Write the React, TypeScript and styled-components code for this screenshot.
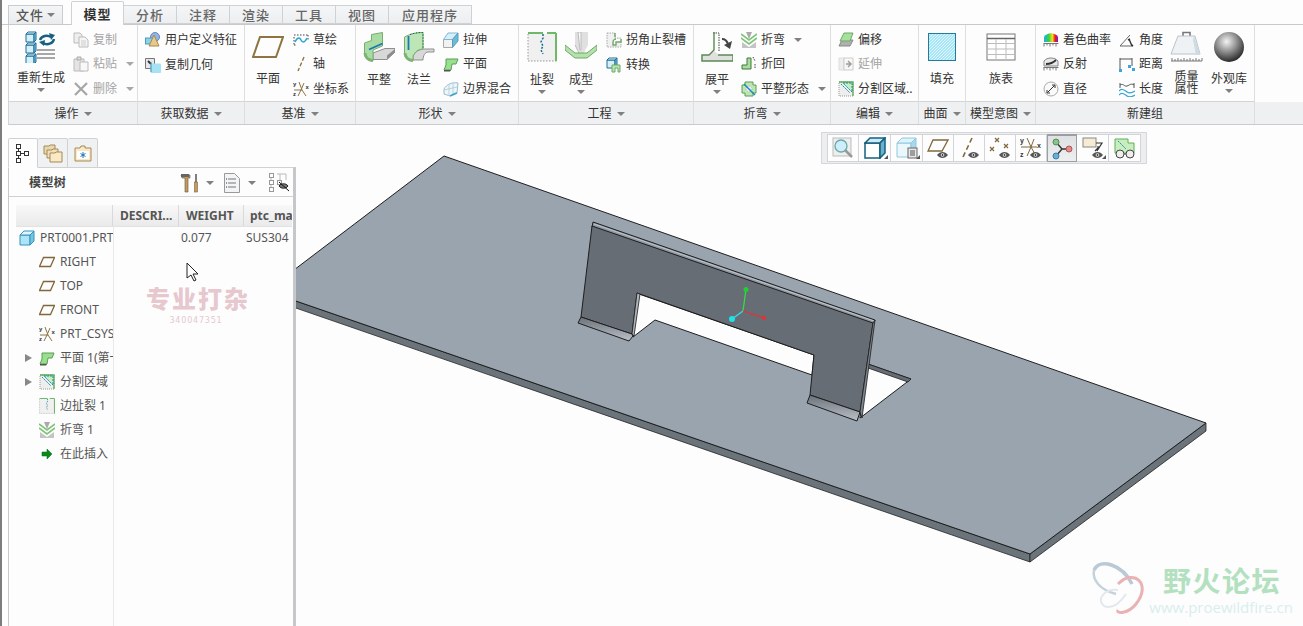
import React from "react";
import styled, { createGlobalStyle } from "styled-components";

const Global = createGlobalStyle`
  html, body { margin: 0; padding: 0; background: #fdfdfd; }
  #root { width: 1303px; height: 626px; overflow: hidden; }
  * { box-sizing: border-box; }
`;

const FONT = `"Noto Sans", "Noto Sans CJK SC", sans-serif`;

const Page = styled.div`
  width: 1303px; height: 626px; display: flex; flex-direction: column; overflow: hidden;
  border-left: 2px solid #7c7c7c; background: #fdfdfd; font: 12px/16px ${FONT}; color: #333;
`;
const TabRow = styled.div`
  display: flex; align-items: flex-end; height: 25px; padding-left: 6px;
  border-bottom: 1px solid #c9c9c9; flex: none; font-size: 13px;
`;
const FileTab = styled.div`
  width: 55px; height: 19px; margin-right: 8px; display: flex; align-items: center; justify-content: center; gap: 3px;
  background: linear-gradient(#f4f5f6, #e9ebed); border: 1px solid #c8cbcf; border-bottom: 0; color: #555; font-weight: 500; letter-spacing: 1px;
`;
const Tab = styled.div<{ $active?: boolean; $w?: number }>`
  width: ${p => p.$w ?? 53}px; height: ${p => (p.$active ? 24 : 19)}px; margin-bottom: ${p => (p.$active ? -1 : 0)}px;
  display: flex; align-items: center; justify-content: center; letter-spacing: 1px; font-weight: ${p => (p.$active ? 700 : 500)};
  color: ${p => (p.$active ? "#333" : "#666")}; background: ${p => (p.$active ? "#fdfdfd" : "linear-gradient(#f5f6f7,#eceef0)")};
  border: 1px solid #cfd2d5; border-bottom: ${p => (p.$active ? "0" : "1px solid #cfd2d5")}; border-left-width: ${p => (p.$active ? 1 : 0)}px;
  border-radius: ${p => (p.$active ? "2px 2px 0 0" : "0")}; z-index: ${p => (p.$active ? 1 : 0)};
`;
const Ribbon = styled.div`
  display: flex; height: 100px; margin-left: 6px; flex: none; border-bottom: 1px solid #c9cbce; background:
    linear-gradient(#eff0f2, #eff0f2) 0 100% / 100% 22px no-repeat, linear-gradient(#d2d4d6, #d2d4d6) 0 77px / 100% 1px no-repeat, #fdfdfd; border-left: 1px solid #d4d4d4;
`;
const Group = styled.div<{ $w: number }>`
  width: ${p => p.$w}px; flex: none; display: flex; flex-direction: column; border-right: 1px solid #dcdee0;
`;
const GroupBody = styled.div<{ $pad?: number }>`
  height: 77px; display: flex; padding: 3px 0 0 ${p => p.$pad ?? 0}px; border-bottom: 1px solid #d2d4d6; flex: none;
`;
const GroupLabel = styled.div`
  flex: 1; display: flex; align-items: center; justify-content: center; gap: 5px; color: #333; padding-top: 1px;
`;
const Caret = styled.i<{ $gray?: boolean }>`
  display: inline-block; width: 0; height: 0; border-left: 4px solid transparent; border-right: 4px solid transparent;
  border-top: 4px solid ${p => (p.$gray ? "#a8a8a8" : "#808080")}; flex: none;
`;
const BigBtn = styled.div<{ $w: number; $ml?: number; $iconH?: number }>`
  width: ${p => p.$w}px; margin-left: ${p => p.$ml ?? 0}px; flex: none; display: flex; flex-direction: column; align-items: center;
  & > svg { margin-top: ${p => p.$iconH ?? 3}px; flex: none; }
`;
const BigLabel = styled.div<{ $top: number; $lh?: number }>`
  white-space: nowrap; margin-top: ${p => p.$top}px; line-height: ${p => p.$lh ?? 14}px; text-align: center;
`;
const BigCaret = styled(Caret)`
  margin-top: 3px;
`;
const SmallCol = styled.div<{ $w: number; $ml?: number }>`
  width: ${p => p.$w}px; margin-left: ${p => p.$ml ?? 0}px; flex: none; display: flex; flex-direction: column;
`;
const SmallBtn = styled.div<{ $off?: boolean }>`
  height: 24.5px; display: flex; align-items: center; gap: 4px; white-space: nowrap; color: ${p => (p.$off ? "#a4a4a4" : "#333")};
  & > svg { flex: none; }
  & > i { margin-left: 5px; }
`;
const Main = styled.div`
  flex: 1; display: flex; min-height: 0; position: relative;
`;
const LeftCol = styled.div`
  width: 294px; padding: 13px 0 0 6px; display: flex; flex-direction: column; flex: none;
`;
const PanelTabs = styled.div`
  display: flex; height: 30px; flex: none; margin-bottom: -1px; z-index: 1;
`;
const PanelTab = styled.div<{ $active?: boolean }>`
  width: 30px; display: flex; align-items: center; justify-content: center; border: 1px solid #cfd1d3; border-left-width: ${p => (p.$active ? 1 : 0)}px;
  border-bottom-color: ${p => (p.$active ? "#fdfdfd" : "#cfd1d3")}; background: ${p => (p.$active ? "#fdfdfd" : "#f0f1f2")}; border-radius: 2px 2px 0 0;
`;
const Panel = styled.div`
  flex: 1; display: flex; flex-direction: column; border-left: 1px solid #c8c8c8; border-right: 3px solid #c5c7ca; border-top: 1px solid #cfd1d3; background: #fdfdfd; position: relative; min-height: 0;
`;
const PanelHead = styled.div`
  height: 29px; flex: none; display: flex; align-items: center; border-bottom: 1px solid #cfd1d3; padding: 1px 0 0 20px;
`;
const PanelTitle = styled.div`
  font-weight: 700; color: #444; flex: none; width: 151px; letter-spacing: .4px;
`;
const HeadTools = styled.div`
  display: flex; align-items: center;
  & > i { margin: 0 10px 0 6px; }
  & > i:nth-of-type(2) { margin: 0 12px 0 8px; }
`;
const Table = styled.div`
  flex: 1; margin: 8px 1px 0 7px; display: flex; flex-direction: column; min-height: 0; overflow: hidden;
`;
const HeadRow = styled.div`
  height: 22px; flex: none; display: grid; grid-template-columns: 97px 66px 65px 1fr; background: linear-gradient(#f8f8f8, #eaeaea);
  border-bottom: 1px solid #e2e2e2;
`;
const HeadCell = styled.div`
  display: flex; align-items: center; padding-left: 7px; border-right: 1px solid #d9d9d9; font-weight: 700; color: #555; overflow: hidden; white-space: nowrap;
  &:last-child { border-right: 0; padding-left: 6px; }
`;
const TreeBody = styled.div`
  flex: 1; margin-top: -1px; background: linear-gradient(#e9e9e9, #e9e9e9) 97px 1px / 1px 100% no-repeat;
`;
const RootRow = styled.div`
  height: 24px; display: grid; grid-template-columns: 97px 66px 65px 1fr; align-items: center; color: #555;
`;
const TreeCell = styled.div`
  display: flex; align-items: center; gap: 5px; padding-left: 3px; white-space: nowrap; overflow: hidden;
  & > svg { flex: none; }
`;
const ValCell = styled.div`
  padding-left: 2px;
`;
const MatCell = styled.div`
  padding-left: 2px;
`;
const TreeRow = styled.div`
  height: 24px; width: 97px; display: flex; align-items: center; color: #555; white-space: nowrap; overflow: hidden;
`;
const Expander = styled.i<{ $show?: boolean }>`
  width: 0; height: 0; flex: none; margin: 0 7px 0 9px; border-top: 4px solid transparent; border-bottom: 4px solid transparent;
  border-left: 7px solid ${p => (p.$show ? "#888" : "transparent")};
`;
const RowIcon = styled.span`
  width: 16px; height: 16px; margin-right: 5px; flex: none; display: flex; align-items: center; justify-content: center;
`;
const Stamp = styled.div`
  position: absolute; left: 137px; top: 117px; width: 100px; text-align: center; color: #e6c8ce; font-weight: 900;
  font-size: 24px; line-height: 26px; letter-spacing: 2px; white-space: nowrap; font-family: "Noto Sans CJK SC", sans-serif;
`;
const StampNo = styled.div`
  font: 400 8px/10px "DejaVu Sans", sans-serif; color: #e6c8ce; letter-spacing: .8px; margin-top: 5px;
`;
const CursorMark = styled.svg`
  position: absolute; left: 177px; top: 94px;
`;
const Canvas = styled.div`
  flex: 1; position: relative; min-width: 0;
  & > svg.scene { display: block; width: 100%; height: 100%; }
`;
const ViewBar = styled.div`
  position: absolute; left: 525px; top: 7px; height: 32px; display: flex; align-items: stretch; padding: 1px 5px;
  background: #eceef0; border: 1px solid #d5d7da;
`;
const ViewBtn = styled.div<{ $active?: boolean; $w?: number }>`
  width: ${p => p.$w ?? 31}px; display: flex; align-items: center; justify-content: center; position: relative;
  background: ${p => (p.$active ? "linear-gradient(#dfe0e2,#eeeff0)" : "#fdfdfd")};
  border: 1px solid #d2d4d7; border-left-width: ${p => (p.$active ? 1 : 0)}px;
  ${p => (p.$active ? "border-color:#9c9ea1; border-top-width:2px;" : "")}
  &:first-child { border-left-width: 1px; }
`;
const Corner = styled.i`
  position: absolute; right: 2px; bottom: 2px; width: 0; height: 0; border-left: 4px solid transparent; border-bottom: 4px solid #555;
`;
const BrandMark = styled.div`
  position: absolute; right: 10px; bottom: 9px; width: 199px; display: flex; flex-direction: column; align-items: flex-end;
`;
const BrandCn = styled.div`
  font: 700 28px/28px "Noto Sans CJK SC", sans-serif; color: #b3e1bf; letter-spacing: 1.5px; margin-right: 12px; margin-bottom: 3px;
`;
const BrandUrl = styled.div`
  font: 400 15px/20px "Open Sans", sans-serif; color: #d9eeee; white-space: nowrap;
`;
const BrandLogo = styled.svg`
  position: absolute; left: -4px; top: -6px;
`;

const Cube = ({ x, y, s = 8, c = "#1d6f96" }: { x: number; y: number; s?: number; c?: string }) => (
  <g stroke={c} strokeWidth="1" strokeLinejoin="round">
    <path d={`M${x} ${y + 2}h${s}v${s}h-${s}z`} fill="#d6f0fa" />
    <path d={`M${x} ${y + 2}l2 -2h${s}l-2 2z`} fill="#eef9fd" />
    <path d={`M${x + s} ${y + 2}l2 -2v${s}l-2 2z`} fill="#7cc3e2" />
  </g>
);
const IRegen = () => (
  <svg width="32" height="32" viewBox="0 0 32 32">
    <Cube x={1} y={1} /><Cube x={1} y={12} /><Cube x={1} y={23} />
    <path d="M15 9a7 6 0 0 1 11-3M29 8a7 6 0 0 1-11 4" fill="none" stroke="#17607f" strokeWidth="2.4" />
    <path d="M24 2l6 2-4 5zM20 9l-6 2 5 4z" fill="#17607f" />
    <path d="M12 19h18M12 23h18M12 27h18" stroke="#8a8a8a" strokeWidth="1.6" />
  </svg>
);
const DocOff = () => (
  <svg width="16" height="16" viewBox="0 0 16 16"><path d="M1 1h6l2 2v8H1z" fill="#eee" stroke="#bbb" /><path d="M6 5h6l3 3v7H6z" fill="#f6f6f6" stroke="#bbb" /><path d="M8 9h5M8 11h5M8 13h5" stroke="#ccc" /></svg>
);
const PasteOff = () => (
  <svg width="16" height="16" viewBox="0 0 16 16"><path d="M1 3h10v12H1z" fill="#e4e4e4" stroke="#bbb" /><path d="M4 1h4v3H4z" fill="#ddd" stroke="#aaa" /><path d="M7 6h8v9H7z" fill="#f8f8f8" stroke="#bbb" /></svg>
);
const XOff = () => (
  <svg width="16" height="16" viewBox="0 0 16 16"><path d="M2 2l12 12M14 2L2 14" stroke="#a6a6a6" strokeWidth="2.2" /></svg>
);
const IUdf = () => (
  <svg width="16" height="16" viewBox="0 0 16 16"><circle cx="10" cy="5" r="4.5" fill="#8fb4e6" stroke="#6a86b6" /><rect x="0.5" y="6" width="7" height="6" fill="#8cd0ea" stroke="#4f9cc0" /><path d="M9 3l5 11H4z" fill="#e8c98c" stroke="#a88a50" /></svg>
);
const ICopyGeom = () => (
  <svg width="16" height="16" viewBox="0 0 16 16"><path d="M.5 1.5h9v10h-9z" fill="#e8e8e8" stroke="#777" /><path d="M3 4l3 3" stroke="#333" strokeWidth="2" /><path d="M6 7h9.500v8.500H6z" fill="#a6e2f4" stroke="#a6e2f4" /><path d="M6 5v10" stroke="#3f8fb0" /></svg>
);
const IPlaneBig = () => (
  <svg width="32" height="22" viewBox="0 0 32 22"><path d="M8 1h23l-7 20H1z" fill="none" stroke="#8e7440" strokeWidth="2" /></svg>
);
const ISketch = () => (
  <svg width="16" height="16" viewBox="0 0 16 16"><path d="M1 3h14M1 13h3" stroke="#444" strokeDasharray="1.500 1.500" /><path d="M1 5v8M15 3v6" stroke="#444" strokeDasharray="1.500 1.500" /><path d="M2 10c3-6 5-4 6-2s3 4 6-2" fill="none" stroke="#2aa3d6" strokeWidth="1.600" /></svg>
);
const IAxis = () => (
  <svg width="16" height="16" viewBox="0 0 16 16"><path d="M11 1L5 15" stroke="#8e7440" strokeWidth="1.400" strokeDasharray="4 2" /></svg>
);
const ICsys = ({ s = 16 }: { s?: number }) => (
  <svg width={s} height={s} viewBox="0 0 16 16"><path d="M6 1l3 8 4 6M11 2L8 9l-3 6M1 9h8" stroke="#8e7440" fill="none" /><text x="0" y="5" fontSize="6" fontFamily="Liberation Sans" fill="#333" fontWeight="700">y</text><text x="0" y="15" fontSize="6" fontFamily="Liberation Sans" fill="#333" fontWeight="700">z</text><text x="12.500" y="8" fontSize="6" fontFamily="Liberation Sans" fill="#333" fontWeight="700">x</text></svg>
);
const IFlat = () => (
  <svg width="32" height="32" viewBox="0 0 32 32">
    <path d="M10 21L22 16.500H32V20L24 27.500H10Z" fill="#d8d8d8" stroke="#8f8f8f" />
    <path d="M24 23.500L32 17V20L24 27.500Z" fill="#8d8d8d" />
    <path d="M1.500 11L8.500 8.500V2.500L19.500 .5V14L10 18V29C5 29 1.500 26 1.500 21Z" fill="#a9dca2" stroke="#78ad70" />
    <path d="M2 21C2 25 5 28 10 28.500" stroke="#7fb277" strokeWidth="3" fill="none" />
    <path d="M6 17.500L19.500 11.500" stroke="#1a78b8" strokeWidth="1.800" />
  </svg>
);
const IFlange = () => (
  <svg width="32" height="32" viewBox="0 0 32 32">
    <path d="M10 24C12 20 16 17 22 17H31V20H25C22 20 20 24 20 28H10Z" fill="#d8d8d8" stroke="#8f8f8f" />
    <path d="M1.500 5C7 2 13 .5 20 .5V17C15 17 12 20 10 24V29C5 29 1.500 26 1.500 21Z" fill="#bde6b6" stroke="#78ad70" />
    <path d="M2 21C2 25 5 28 10 28.500" stroke="#7fb277" strokeWidth="3" fill="none" />
    <path d="M5.500 4V18" stroke="#1a78b8" strokeWidth="1.800" />
    <path d="M7 2.500C11 1 15 .5 20 .5V16" stroke="#1a6a50" strokeDasharray="1.500 1.500" fill="none" />
  </svg>
);
const IExtrude = () => (
  <svg width="16" height="16" viewBox="0 0 16 16"><path d="M.5 7.500h9v8h-9z" fill="#f2f2f2" stroke="#aaa" /><path d="M.5 7.500L5 1h10L9.500 7.500z" fill="#d6eef8" stroke="#7fb9d4" /><path d="M9.500 7.500L15 1v8l-5.500 6.500z" fill="#6fb8d8" stroke="#5a9dbd" /></svg>
);
const IPlanar = ({ s = 16 }: { s?: number }) => (
  <svg width={s} height={s} viewBox="0 0 16 16"><path d="M3 3h12l-2 5H9l-1 6H1l2-5z" fill="#98e08e" stroke="#5f9a58" /><path d="M1 14h7l-1 1.500H1z" fill="#555" /></svg>
);
const IBlend = () => (
  <svg width="16" height="16" viewBox="0 0 16 16"><path d="M1 8c3-5 8-7 14-6l-1 10c-3 0-5 1-7 3L1 13z" fill="#eef6fa" stroke="#9dbccb" /><path d="M6 3v12M10 2v11M1 9l13-3" stroke="#b6d2de" /><path d="M7 15l7-3" stroke="#3ea4d0" strokeWidth="1.500" /></svg>
);
const IRip = () => (
  <svg width="30" height="30" viewBox="0 0 30 30"><path d="M1 2h29v27H1z" fill="#f0f0f0" /><path d="M1 2v27h29" fill="none" stroke="#999" strokeDasharray="1.500 1.500" /><path d="M1 1h15M29 1v28M20 1h9" stroke="#6fb868" strokeWidth="2" fill="none" /><path d="M16 2v4l-2 4 2 4-2 4 2 4" stroke="#19708f" strokeWidth="1.500" strokeDasharray="2 1.500" fill="none" /></svg>
);
const IForm = () => (
  <svg width="32" height="30" viewBox="0 0 32 30"><path d="M10 0h13v13l-6.500 12L10 13z" fill="#e0e0e0" /><path d="M13 0h3v18h-1zM10 13l6 12" fill="#fbfbfb" stroke="#bbb" /><path d="M0 13l10 8h12l10-8v5l-10 8H10L0 18z" fill="#b3e2ab" stroke="#6fa868" /></svg>
);
const ICorner = () => (
  <svg width="16" height="16" viewBox="0 0 16 16"><path d="M1 1h8v5h6v9H1z" fill="#f0f0f0" stroke="#aaa" strokeDasharray="1.500 1" /><path d="M9 1v4M15 7v3h-5v3h-3v-3c0-2 2-3 3-3" fill="#fff" stroke="#6fa868" strokeWidth="1.400" /></svg>
);
const IConvert = () => (
  <svg width="16" height="16" viewBox="0 0 16 16"><Cube x={1} y={1} s={8} /><path d="M6 8l8 0v7h-2v-4H9v4H6z" fill="#b8e8b0" stroke="#6fa868" /></svg>
);
const IUnbend = () => (
  <svg width="32" height="30" viewBox="0 0 32 30"><path d="M13 0v19l-5 4H0v6h32v-6H18l-5-4" fill="#e0e0e0" /><path d="M12 1h6v18" fill="none" stroke="#444" strokeDasharray="1.500 1" /><path d="M13 0v18l-5 5H1v6h31v-6H17" fill="none" stroke="#5a8a50" strokeWidth="1.400" /><path d="M21 7c3 0 5 2 6 5" stroke="#444" strokeWidth="2.200" fill="none" /><path d="M31 9l-2 8-6-4z" fill="#444" /></svg>
);
const IBend = ({ s = 16 }: { s?: number }) => (
  <svg width={s} height={s} viewBox="0 0 16 16"><path d="M5 0h6l-3 7z" fill="#aaa" /><path d="M0 2l8 6 8-6M0 6l8 6 8-6" fill="none" stroke="#7fc478" strokeWidth="1.600" /><path d="M1 10l7 5 7-5v6H1z" fill="#c4c4c4" /></svg>
);
const IUnfold = () => (
  <svg width="16" height="16" viewBox="0 0 16 16"><path d="M1 9h5V2h4v11H1z" fill="#a8dca0" stroke="#3e7a38" /><path d="M12 1l2 4M14 8v5" stroke="#444" strokeDasharray="1.500 1" /></svg>
);
const IFlatState = () => (
  <svg width="16" height="16" viewBox="0 0 16 16"><path d="M4 1h8v3h3v8h-3v3H4v-3H1V4h3z" fill="#bbe8b2" stroke="#5d9c54" /><circle cx="8" cy="8" r="3" fill="#eee" stroke="#aaa" strokeDasharray="1 1" /><path d="M3 3l11 11" stroke="#1d88c0" strokeWidth="1.500" /></svg>
);
const IOffset = () => (
  <svg width="16" height="16" viewBox="0 0 16 16"><path d="M1 14l3-6h11l-3 6z" fill="#b0b0b0" stroke="#888" /><path d="M2 9l4-8h9l-3 8z" fill="#a6e09c" stroke="#6fa868" /></svg>
);
const IExtend = () => (
  <svg width="16" height="16" viewBox="0 0 16 16"><path d="M1 2h5v12H1z" fill="#eee" stroke="#ddd" /><path d="M6 2h9v12H6z" fill="#f8f8f8" stroke="#ccc" /><path d="M8 8h4M10 5l3 3-3 3" stroke="#999" strokeWidth="1.400" fill="none" /></svg>
);
const ISplit = ({ s = 16 }: { s?: number }) => (
  <svg width={s} height={s} viewBox="0 0 16 16"><path d="M1 1h14v14H1z" fill="#eee" stroke="#999" strokeDasharray="1 1" /><path d="M1 1h14v14" fill="none" stroke="#5fae56" strokeWidth="1.300" /><path d="M3 3l9 9M5 2h9v9z" fill="#c7edc0" stroke="#1c88a8" strokeDasharray="2 1" /></svg>
);
const IFill = () => (
  <svg width="28" height="28" viewBox="0 0 28 28"><defs><pattern id="ht" width="3" height="3" patternUnits="userSpaceOnUse"><rect width="3" height="3" fill="#a8e6f7" /><path d="M0 3l3-3" stroke="#dff6fc" /></pattern></defs><rect x=".5" y=".5" width="27" height="27" fill="url(#ht)" stroke="#1f7d99" /></svg>
);
const ITable = () => (
  <svg width="30" height="28" viewBox="0 0 30 28"><rect x="1" y="1" width="28" height="26" fill="#fff" stroke="#777" /><path d="M1 5.500h28" stroke="#666" strokeWidth="1.500" /><path d="M1 10.500h28M1 16h28M1 21.500h28M10 6v21M20 6v21" stroke="#bcbcbc" /></svg>
);
const ICurv = () => (
  <svg width="16" height="16" viewBox="0 0 16 16"><defs><linearGradient id="rb" x1="0" x2="1"><stop offset="0" stopColor="#18b0e8" /><stop offset=".35" stopColor="#3ad040" /><stop offset=".6" stopColor="#f0e020" /><stop offset=".8" stopColor="#e81818" /><stop offset="1" stopColor="#8018d8" /></linearGradient></defs><path d="M1 10V5c3-5 11-5 14 0v5z" fill="url(#rb)" /><path d="M0.500 11.500h15M1 11.500v3M4 11.500v2M7 11.500v3M10 11.500v2M13 11.500v3" stroke="#777" fill="none" /></svg>
);
const IReflect = () => (
  <svg width="16" height="16" viewBox="0 0 16 16"><path d="M1 10V5c3-4 11-4 14 0v5z" fill="#e8e8e8" stroke="#888" /><path d="M3 8c3 0 7-1 10-4" stroke="#333" strokeWidth="1.800" fill="none" /><path d="M0.500 11.500h15M1 11.500v3M4 11.500v2M7 11.500v3M10 11.500v2M13 11.500v3" stroke="#777" fill="none" /></svg>
);
const IDiameter = () => (
  <svg width="16" height="16" viewBox="0 0 16 16"><circle cx="8" cy="8" r="7" fill="#fafafa" stroke="#aaa" /><path d="M4.500 11.500l7-7M4 9v3h3M9 4h3v3" stroke="#333" fill="none" /></svg>
);
const IAngle = () => (
  <svg width="16" height="16" viewBox="0 0 16 16"><path d="M1 14L11 3M1 14h13" stroke="#666" fill="none" /><path d="M10 7l3 7M9 8l2-1M12 12l2 2" stroke="#333" strokeWidth="1.400" /></svg>
);
const IDist = () => (
  <svg width="16" height="16" viewBox="0 0 16 16"><path d="M1 2v11M13 2v8M1 3h12" stroke="#555" fill="none" /><rect x="0" y="13" width="3" height="3" fill="#3ca6d8" /><rect x="9" y="9" width="3" height="3" fill="#3ca6d8" /><rect x="13" y="12" width="3" height="3" fill="#3ca6d8" /></svg>
);
const ILength = () => (
  <svg width="16" height="16" viewBox="0 0 16 16"><path d="M1 2v5M15 2v5M1 4c4-2 4 2 7 1s4-3 7-1" stroke="#555" fill="none" /><path d="M0 10c3-3 5-1 8 1s5 1 8-1M0 14c3-3 5-1 8 1s5 1 8-1" stroke="#35a5d8" strokeWidth="1.200" fill="none" /></svg>
);
const IMass = () => (
  <svg width="33" height="33" viewBox="0 0 33 33"><path d="M13 7V2.500h7V7" fill="none" stroke="#777" strokeWidth="1.600" /><path d="M8 6h17l5 18H1z" fill="#eef2f5" stroke="#b8c4cc" /><path d="M24 6l6 18-4 1-3-15z" fill="#cfdbe2" /><path d="M1 31h31M2 31v-3M5 31v-2M8 31v-3M11 31v-2M14 31v-3M17 31v-2M20 31v-3M23 31v-2M26 31v-3M29 31v-2M32 31v-3" stroke="#777" fill="none" /></svg>
);
const ISphere = () => (
  <svg width="30" height="30" viewBox="0 0 30 30"><defs><radialGradient id="sp" cx=".42" cy=".32" r=".72"><stop offset="0" stopColor="#f4f4f4" /><stop offset=".5" stopColor="#8a8a8a" /><stop offset="1" stopColor="#1e1e1e" /></radialGradient></defs><circle cx="15" cy="15" r="15" fill="url(#sp)" /></svg>
);
const ITreeTab = () => (
  <svg width="16" height="20" viewBox="0 0 16 20" fill="none" stroke="#333"><rect x="1.500" y="1.500" width="4" height="4" /><rect x="1.500" y="8.500" width="4" height="4" /><rect x="1.500" y="15.500" width="4" height="4" /><rect x="9.500" y="8.500" width="4" height="4" /><path d="M3.500 5.500v3M3.500 12.500v3M5.500 10.500h4" /></svg>
);
const IFolders = () => (
  <svg width="20" height="20" viewBox="0 0 20 20"><path d="M1 3h5l1-1h5v9H1z" fill="#e9d8ae" stroke="#a48a58" /><path d="M4 7h5l1-1h5v9H4z" fill="#f0dfb8" stroke="#a48a58" /><path d="M7 10h5l1-1h6v10H7z" fill="#fae9c4" stroke="#a48a58" /></svg>
);
const IFolderStar = () => (
  <svg width="18" height="17" viewBox="0 0 18 17"><path d="M1 3h5l1-2h4v2h6v13H1z" fill="#fae9c4" stroke="#a48a58" /><rect x="3" y="6" width="12" height="8" fill="#fff" /><path d="M9 7v6M6.500 8.500l5 3M11.500 8.500l-5 3" stroke="#1878c0" /></svg>
);
const ITools = () => (
  <svg width="20" height="20" viewBox="0 0 20 20"><path d="M1 2h9v3H8v14H5V5H2z" fill="#c99a52" stroke="#555" strokeWidth=".6" /><path d="M1 1h8v3H1z" fill="#666" /><path d="M16 1v8" stroke="#555" strokeWidth="1.500" /><rect x="14.500" y="9" width="3" height="10" fill="#c99a52" stroke="#765" strokeWidth=".6" /></svg>
);
const IListDoc = () => (
  <svg width="16" height="20" viewBox="0 0 16 20"><path d="M.5 .5h10l5 5v14H.5z" fill="#f2f4f5" stroke="#999" /><path d="M4 6h8M4 10h8M4 14h8" stroke="#777" /><path d="M2 6h1M2 10h1M2 14h1" stroke="#333" /></svg>
);
const ITreeEye = () => (
  <svg width="22" height="20" viewBox="0 0 22 20" fill="none" stroke="#999"><rect x="1.500" y=".5" width="4" height="4" /><rect x="1.500" y="7.500" width="4" height="4" /><rect x="1.500" y="14.500" width="4" height="4" /><rect x="9.500" y="7.500" width="4" height="4" /><path d="M9 1h9v6M12 1v6M3 5v2M3 12v2" stroke="#bbb" /><path d="M11 13c2-3 7-3 9 0-2 3-7 3-9 0z" fill="#777" stroke="#222" /><path d="M11 9l10 9" stroke="#111" /></svg>
);
const IPart = () => (
  <svg width="16" height="16" viewBox="0 0 16 16"><path d="M1 5h10v10H1z" fill="#aee4f7" stroke="#3594bb" /><path d="M1 5l4-4h10L11 5z" fill="#dff5fd" stroke="#3594bb" /><path d="M11 5l4-4v10l-4 4z" fill="#74c5e4" stroke="#3594bb" /></svg>
);
const IPlaneSm = () => (
  <svg width="16" height="12" viewBox="0 0 16 12"><path d="M4.500 1.500h11l-4 9H.5z" fill="none" stroke="#7f683a" strokeWidth="1.300" /></svg>
);
const IArrowGreen = () => (
  <svg width="12" height="12" viewBox="0 0 12 12"><path d="M1 4h5V1l5 5-5 5V8H1z" fill="#0a8a10" stroke="#063" strokeWidth=".5" /></svg>
);
const Eye = ({ x = 8, y = 13 }: { x?: number; y?: number }) => (
  <g transform={`translate(${x} ${y})`}><path d="M0 4c3-4 8-4 11 0-3 4-8 4-11 0z" fill="#555" /><circle cx="5.500" cy="4" r="1.800" fill="#eee" /><circle cx="5.500" cy="4" r=".9" fill="#333" /></g>
);
const VBox = ({ children }: { children: React.ReactNode }) => (
  <svg width="22" height="22" viewBox="0 0 22 22" fill="none">{children}</svg>
);
const VZoom = () => <VBox><rect x="1" y="1" width="18" height="18" fill="#eee" stroke="#bbb" /><circle cx="9" cy="9" r="6" fill="#cdeefa" stroke="#6aa" strokeWidth="1.300" /><path d="M13 13l7 7" stroke="#999" strokeWidth="2.500" /></VBox>;
const VCube = () => <VBox><path d="M1 6h15v15H1z" fill="#fff" stroke="#14607f" strokeWidth="1.500" /><path d="M1 6l5-5h15l-5 5z" fill="#cdeaf4" stroke="#14607f" strokeWidth="1.500" /><path d="M16 6l5-5v15l-5 5z" fill="#6db0cc" stroke="#14607f" strokeWidth="1.500" /></VBox>;
const VCubeDoc = () => <VBox><path d="M1 6h14v14H1z" fill="#eaf7fb" stroke="#8fc8de" /><path d="M1 6l5-5h14l-5 5z" fill="#dff3fa" stroke="#8fc8de" /><path d="M15 6l5-5v12l-5 6z" fill="#a8d8ea" stroke="#8fc8de" /><rect x="12" y="11" width="9" height="10" fill="#e8e8e8" stroke="#666" /><path d="M14 14h5M14 16h5M14 18h5" stroke="#555" /></VBox>;
const VPlane = () => <VBox><path d="M6 3h15l-6 11H1z" stroke="#7f683a" strokeWidth="1.300" /><Eye x={10} y={14} /></VBox>;
const VAxis = () => <VBox><path d="M14 1L5 20" stroke="#7f683a" strokeWidth="1.600" strokeDasharray="5 3" /><Eye x={10} y={14} /></VBox>;
const VPoints = () => <VBox><path d="M6 1l4 4M10 1L6 5M15 7l4 4M19 7l-4 4M1 10l4 4M5 10l-4 4" stroke="#7f683a" strokeWidth="1.200" /><Eye x={10} y={14} /></VBox>;
const VCsys = () => <VBox><path d="M7 1l4 9 5 9M14 2l-3 8-4 9M1 10h16" stroke="#7f683a" /><text x="0" y="6" fontSize="7" fontFamily="Liberation Sans" fill="#333" fontWeight="700">y</text><text x="0" y="20" fontSize="7" fontFamily="Liberation Sans" fill="#333" fontWeight="700">z</text><text x="17" y="11" fontSize="7" fontFamily="Liberation Sans" fill="#333" fontWeight="700">x</text><Eye x={10} y={14} /></VBox>;
const VNodes = () => <VBox><path d="M5 4l6 7-6 7M11 11h7" stroke="#333" strokeWidth="1.400" /><circle cx="5" cy="4" r="3" fill="#8ac48a" stroke="#5a8a5a" /><circle cx="18" cy="11" r="3" fill="#e88a8a" stroke="#a85a5a" /><circle cx="5" cy="18" r="3" fill="#6aaed6" stroke="#3a7ea6" /></VBox>;
const VNote = () => <VBox><rect x="1" y="1" width="13" height="9" fill="#f6ecd4" stroke="#888" /><path d="M14 6h6L15 14M16 9v2l-3 3" stroke="#333" strokeWidth="1.200" /><Eye x={10} y={14} /></VBox>;
const VGlasses = () => <VBox><path d="M1 2h13v4h6v10H1z" fill="#c8eec0" stroke="#5fae56" /><path d="M4 4l8 8" stroke="#1c88a8" strokeDasharray="2 1" /><circle cx="6" cy="17" r="4" fill="#eee" stroke="#444" /><circle cx="16" cy="17" r="4" fill="#eee" stroke="#444" /><path d="M10 17h2" stroke="#444" /></VBox>;

const Scene = () => (
  <svg className="scene" viewBox="296 125 1007 501">
    <defs>
      <linearGradient id="bendL" x1="0" y1="0" x2="0.1" y2="1"><stop offset="0" stopColor="#6a7179" /><stop offset="1" stopColor="#b3bac1" /></linearGradient>
    </defs>
    <path d="M290 299L1030 554V562L290 306Z" fill="#6b737b" stroke="#222" strokeWidth=".8" />
    <path d="M1030 554L1206 423V431L1030 562Z" fill="#6b737b" stroke="#222" strokeWidth=".8" />
    <path d="M290 273L444 156L1206 423L1030 554L290 299Z" fill="#9aa4ae" stroke="#1e1e1e" strokeWidth="1" />
    <path d="M639 294L814 355L812 375L655 320L633 337Z" fill="#fdfdfd" stroke="#1e1e1e" strokeWidth="1" />
    <path d="M868 364L911 379L860 418Z" fill="#fdfdfd" stroke="#1e1e1e" strokeWidth="1" />
    <path d="M868 364L911 379L908 382L868 368Z" fill="#666d75" stroke="#1e1e1e" strokeWidth=".8" />
    <path d="M593 222L875 320L873 325L592 227Z" fill="#8f98a2" stroke="#1e1e1e" strokeWidth="1" />
    <path d="M594 224L874 321" stroke="#dfe3e6" strokeWidth=".6" fill="none" />
    <path d="M592 226L873 323L860 412L810 395L814 355L637 293L632 334L581 317Z" fill="#666d75" stroke="#1e1e1e" strokeWidth="1" />
    <path d="M873 323L875 320L862 418L860 412Z" fill="#7f8790" stroke="#1e1e1e" strokeWidth=".8" />
    <path d="M637 293L640 294L634 336L632 334Z" fill="#aeb5bc" stroke="#1e1e1e" strokeWidth=".8" />
    <path d="M581 317L632 334L633 336L629 341L578 323Z" fill="url(#bendL)" stroke="#1e1e1e" strokeWidth="1" />
    <path d="M810 395L860 412L857 421L807 403Z" fill="url(#bendL)" stroke="#1e1e1e" strokeWidth="1" />
    <path d="M743 311L746 289" stroke="#30e040" strokeWidth="1.300" />
    <path d="M743 311L732 319" stroke="#30e0e8" strokeWidth="1.300" />
    <path d="M743 311L764 318" stroke="#e83030" strokeWidth="1.300" />
    <circle cx="746" cy="289.500" r="2.500" fill="#20d030" />
    <circle cx="732" cy="319" r="3" fill="#20e0e8" />
    <circle cx="764" cy="318" r="2" fill="#e83030" />
  </svg>
);

const Small = ({ icon, text, off, caret }: { icon: React.ReactNode; text: string; off?: boolean; caret?: boolean }) => (
  <SmallBtn $off={off}>{icon}{text}{caret && <Caret $gray={off} />}</SmallBtn>
);
const Big = ({ icon, text, w, ml, top, caret, iconTop, lh }: { icon: React.ReactNode; text: React.ReactNode; w: number; ml?: number; top: number; caret?: boolean; iconTop?: number; lh?: number }) => (
  <BigBtn $w={w} $ml={ml} $iconH={iconTop}>{icon}<BigLabel $top={top} $lh={lh}>{text}</BigLabel>{caret && <BigCaret />}</BigBtn>
);
const G = ({ w, pad, label, caret = true, children }: { w: number; pad?: number; label: string; caret?: boolean; children: React.ReactNode }) => (
  <Group $w={w}><GroupBody $pad={pad}>{children}</GroupBody><GroupLabel>{label}{caret && <Caret />}</GroupLabel></Group>
);

const rows: { icon: React.ReactNode; text: string; exp?: boolean }[] = [
  { icon: <IPlaneSm />, text: "RIGHT" },
  { icon: <IPlaneSm />, text: "TOP" },
  { icon: <IPlaneSm />, text: "FRONT" },
  { icon: <ICsys />, text: "PRT_CSYS" },
  { icon: <IPlanar />, text: "平面 1(第一", exp: true },
  { icon: <ISplit />, text: "分割区域", exp: true },
  { icon: <IRip />, text: "边扯裂 1" },
  { icon: <IBend />, text: "折弯 1" },
  { icon: <IArrowGreen />, text: "在此插入" },
];

export default function App() {
  return (
    <Page>
      <Global />
      <TabRow>
        <FileTab>文件<Caret /></FileTab>
        <Tab $active>模型</Tab>
        <Tab>分析</Tab><Tab>注释</Tab><Tab>渲染</Tab><Tab>工具</Tab><Tab>视图</Tab>
        <Tab $w={83}>应用程序</Tab>
      </TabRow>
      <Ribbon>
        <G w={129} label="操作">
          <Big w={60} ml={2} top={8} caret iconTop={3} icon={<IRegen />} text="重新生成" />
          <SmallCol $w={64} $ml={2}>
            <Small off icon={<DocOff />} text="复制" />
            <Small off caret icon={<PasteOff />} text="粘贴" />
            <Small off caret icon={<XOff />} text="删除" />
          </SmallCol>
        </G>
        <G w={107} pad={7} label="获取数据">
          <SmallCol $w={96}>
            <Small icon={<IUdf />} text="用户定义特征" />
            <Small icon={<ICopyGeom />} text="复制几何" />
          </SmallCol>
        </G>
        <G w={111} pad={7} label="基准">
          <Big w={32} top={14} iconTop={8} icon={<IPlaneBig />} text="平面" />
          <SmallCol $w={64} $ml={9}>
            <Small icon={<ISketch />} text="草绘" />
            <Small icon={<IAxis />} text="轴" />
            <Small icon={<ICsys />} text="坐标系" />
          </SmallCol>
        </G>
        <G w={163} pad={7} label="形状">
          <Big w={32} top={9} iconTop={4} icon={<IFlat />} text="平整" />
          <Big w={32} ml={8} top={9} iconTop={4} icon={<IFlange />} text="法兰" />
          <SmallCol $w={76} $ml={8}>
            <Small icon={<IExtrude />} text="拉伸" />
            <Small icon={<IPlanar />} text="平面" />
            <Small icon={<IBlend />} text="边界混合" />
          </SmallCol>
        </G>
        <G w={175} pad={8} label="工程">
          <Big w={30} top={11} caret iconTop={4} icon={<IRip />} text="扯裂" />
          <Big w={32} ml={8} top={11} caret iconTop={4} icon={<IForm />} text="成型" />
          <SmallCol $w={90} $ml={9}>
            <Small icon={<ICorner />} text="拐角止裂槽" />
            <Small icon={<IConvert />} text="转换" />
          </SmallCol>
        </G>
        <G w={137} pad={7} label="折弯">
          <Big w={32} top={11} caret iconTop={4} icon={<IUnbend />} text="展平" />
          <SmallCol $w={90} $ml={8}>
            <Small caret icon={<IBend />} text="折弯" />
            <Small icon={<IUnfold />} text="折回" />
            <Small caret icon={<IFlatState />} text="平整形态" />
          </SmallCol>
        </G>
        <G w={88} pad={7} label="编辑">
          <SmallCol $w={76}>
            <Small icon={<IOffset />} text="偏移" />
            <Small off icon={<IExtend />} text="延伸" />
            <Small icon={<ISplit />} text="分割区域.." />
          </SmallCol>
        </G>
        <G w={47} pad={9} label="曲面">
          <Big w={28} top={11} iconTop={5} icon={<IFill />} text="填充" />
        </G>
        <G w={70} pad={20} label="模型意图">
          <Big w={30} top={11} iconTop={5} icon={<ITable />} text="族表" />
        </G>
        <G w={219} pad={7} label="新建组" caret={false}>
          <SmallCol $w={76}>
            <Small icon={<ICurv />} text="着色曲率" />
            <Small icon={<IReflect />} text="反射" />
            <Small icon={<IDiameter />} text="直径" />
          </SmallCol>
          <SmallCol $w={51}>
            <Small icon={<IAngle />} text="角度" />
            <Small icon={<IDist />} text="距离" />
            <Small icon={<ILength />} text="长度" />
          </SmallCol>
          <Big w={33} top={8} iconTop={2} lh={12} icon={<IMass />} text={<>质量<br />属性</>} />
          <Big w={36} ml={8} top={10} caret iconTop={4} icon={<ISphere />} text="外观库" />
        </G>
      </Ribbon>
      <Main>
        <LeftCol>
          <PanelTabs>
            <PanelTab $active><ITreeTab /></PanelTab>
            <PanelTab><IFolders /></PanelTab>
            <PanelTab><IFolderStar /></PanelTab>
          </PanelTabs>
          <Panel>
            <PanelHead>
              <PanelTitle>模型树</PanelTitle>
              <HeadTools>
                <ITools /><Caret />
                <IListDoc /><Caret />
                <ITreeEye />
              </HeadTools>
            </PanelHead>
            <Table>
              <HeadRow>
                <HeadCell />
                <HeadCell>DESCRI...</HeadCell>
                <HeadCell>WEIGHT</HeadCell>
                <HeadCell>ptc_ma</HeadCell>
              </HeadRow>
              <TreeBody>
                <RootRow>
                  <TreeCell><IPart />PRT0001.PRT</TreeCell>
                  <div />
                  <ValCell>0.077</ValCell>
                  <MatCell>SUS304</MatCell>
                </RootRow>
                {rows.map(r => (
                  <TreeRow key={r.text}>
                    <Expander $show={r.exp} />
                    <RowIcon>{r.icon}</RowIcon>
                    {r.text}
                  </TreeRow>
                ))}
              </TreeBody>
            </Table>
            <Stamp>专业打杂<StampNo>340047351</StampNo></Stamp>
            <CursorMark width="14" height="20" viewBox="0 0 14 20">
              <path d="M1 1v15l4-3 3 6 2-1-3-6h5z" fill="#fff" stroke="#222" strokeWidth="1" />
            </CursorMark>
          </Panel>
        </LeftCol>
        <Canvas>
          <Scene />
          <ViewBar>
            <ViewBtn $w={32}><VZoom /></ViewBtn>
            <ViewBtn $w={32}><VCube /><Corner /></ViewBtn>
            <ViewBtn $w={32}><VCubeDoc /><Corner /></ViewBtn>
            <ViewBtn><VPlane /></ViewBtn>
            <ViewBtn><VAxis /></ViewBtn>
            <ViewBtn><VPoints /></ViewBtn>
            <ViewBtn><VCsys /></ViewBtn>
            <ViewBtn $active $w={30}><VNodes /></ViewBtn>
            <ViewBtn $w={32}><VNote /><Corner /></ViewBtn>
            <ViewBtn $w={32}><VGlasses /></ViewBtn>
          </ViewBar>
          <BrandMark>
            <BrandLogo width="58" height="58" viewBox="0 0 58 58" fill="none">
              <path d="M4 10C10 -2 32 4 42 24" stroke="#b9c9d6" strokeWidth="3.500" />
              <path d="M4 10C2 20 10 30 26 34" stroke="#c4d2dc" strokeWidth="2.500" />
              <path d="M28 24C44 8 62 24 46 44 38 54 26 54 28 50" stroke="#eab2b4" strokeWidth="3" />
              <path d="M28 30C14 28 6 40 14 46 24 50 32 40 36 34" stroke="#e2e8ec" strokeWidth="2" />
            </BrandLogo>
            <BrandCn>野火论坛</BrandCn>
            <BrandUrl>www.proewildfire.cn</BrandUrl>
          </BrandMark>
        </Canvas>
      </Main>
    </Page>
  );
}
